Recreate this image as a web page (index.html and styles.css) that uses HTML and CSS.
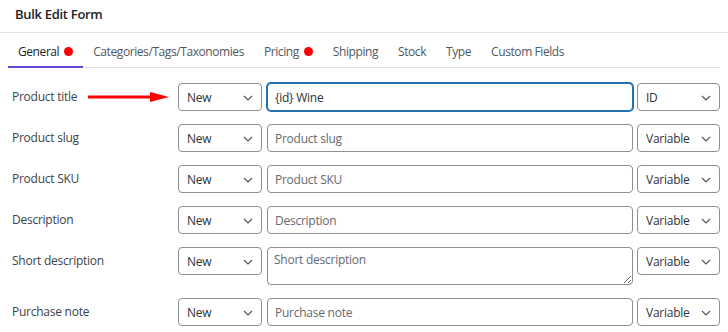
FILE: index.html
```html
<!DOCTYPE html>
<html>
<head>
	<meta charset="utf-8">
	<title>Bulk Edit Form</title>
	<link rel="stylesheet" href="styles.css">
</head>
<body>

<div class="panel-head">
	<span class="panel-title">Bulk Edit Form</span>
</div>

<div class="tabs">
	<div class="tab active">General <span class="dot"></span></div>
	<div class="tab">Categories/Tags/Taxonomies</div>
	<div class="tab">Pricing <span class="dot"></span></div>
	<div class="tab">Shipping</div>
	<div class="tab">Stock</div>
	<div class="tab">Type</div>
	<div class="tab">Custom Fields</div>
</div>

<div class="form">

	<div class="row">
		<label class="row-label">Product title</label>
		<svg class="pointer" width="82" height="12" viewBox="0 0 82 12">
			<line x1="0" y1="6" x2="64" y2="6" stroke="#f00" stroke-width="3" stroke-linecap="round"/>
			<polygon points="62,1 81,6 62,11" fill="#f00"/>
		</svg>
		<div class="select mode"><select><option>New</option></select><svg class="chev" width="10" height="6" viewBox="0 0 10 6"><path d="M1 1l4 4 4-4" fill="none" stroke="#50575e" stroke-width="1.2"/></svg></div>
		<input class="field focused" type="text" value="{id} Wine">
		<div class="select kind"><select><option>ID</option></select><svg class="chev" width="10" height="6" viewBox="0 0 10 6"><path d="M1 1l4 4 4-4" fill="none" stroke="#50575e" stroke-width="1.2"/></svg></div>
	</div>

	<div class="row">
		<label class="row-label">Product slug</label>
		<div class="select mode"><select><option>New</option></select><svg class="chev" width="10" height="6" viewBox="0 0 10 6"><path d="M1 1l4 4 4-4" fill="none" stroke="#50575e" stroke-width="1.2"/></svg></div>
		<input class="field" type="text" placeholder="Product slug">
		<div class="select kind"><select><option>Variable</option></select><svg class="chev" width="10" height="6" viewBox="0 0 10 6"><path d="M1 1l4 4 4-4" fill="none" stroke="#50575e" stroke-width="1.2"/></svg></div>
	</div>

	<div class="row">
		<label class="row-label">Product SKU</label>
		<div class="select mode"><select><option>New</option></select><svg class="chev" width="10" height="6" viewBox="0 0 10 6"><path d="M1 1l4 4 4-4" fill="none" stroke="#50575e" stroke-width="1.2"/></svg></div>
		<input class="field" type="text" placeholder="Product SKU">
		<div class="select kind"><select><option>Variable</option></select><svg class="chev" width="10" height="6" viewBox="0 0 10 6"><path d="M1 1l4 4 4-4" fill="none" stroke="#50575e" stroke-width="1.2"/></svg></div>
	</div>

	<div class="row">
		<label class="row-label">Description</label>
		<div class="select mode"><select><option>New</option></select><svg class="chev" width="10" height="6" viewBox="0 0 10 6"><path d="M1 1l4 4 4-4" fill="none" stroke="#50575e" stroke-width="1.2"/></svg></div>
		<input class="field" type="text" placeholder="Description">
		<div class="select kind"><select><option>Variable</option></select><svg class="chev" width="10" height="6" viewBox="0 0 10 6"><path d="M1 1l4 4 4-4" fill="none" stroke="#50575e" stroke-width="1.2"/></svg></div>
	</div>

	<div class="row">
		<label class="row-label">Short description</label>
		<div class="select mode"><select><option>New</option></select><svg class="chev" width="10" height="6" viewBox="0 0 10 6"><path d="M1 1l4 4 4-4" fill="none" stroke="#50575e" stroke-width="1.2"/></svg></div>
		<textarea class="field area" placeholder="Short description"></textarea>
		<div class="select kind"><select><option>Variable</option></select><svg class="chev" width="10" height="6" viewBox="0 0 10 6"><path d="M1 1l4 4 4-4" fill="none" stroke="#50575e" stroke-width="1.2"/></svg></div>
	</div>

	<div class="row">
		<label class="row-label">Purchase note</label>
		<div class="select mode"><select><option>New</option></select><svg class="chev" width="10" height="6" viewBox="0 0 10 6"><path d="M1 1l4 4 4-4" fill="none" stroke="#50575e" stroke-width="1.2"/></svg></div>
		<input class="field" type="text" placeholder="Purchase note">
		<div class="select kind"><select><option>Variable</option></select><svg class="chev" width="10" height="6" viewBox="0 0 10 6"><path d="M1 1l4 4 4-4" fill="none" stroke="#50575e" stroke-width="1.2"/></svg></div>
	</div>

</div>

</body>
</html>
```

FILE: styles.css
```css
* {
	box-sizing: border-box;
}

body {
	margin: 0;
	background: #fff;
	color: #3c434a;
	font-family: "Open Sans", sans-serif;
	font-size: 12px;
	letter-spacing: -0.25px;
}

/* Header */
.panel-head {
	height: 33px;
	padding: 5px 15px 0;
	border-bottom: 1px solid #e2e4e7;
}

.panel-title {
	font-size: 13px;
	font-weight: 600;
	letter-spacing: -0.3px;
	color: #1d2327;
}

/* Tabs */
.tabs {
	display: flex;
	margin: 0 8px;
	padding-top: 7px;
	border-bottom: 1px solid #e2e4e7;
}

.tab {
	display: flex;
	align-items: center;
	gap: 5px;
	height: 28px;
	padding: 0 10px 4px;
	color: #50575e;
	font-weight: 500;
	letter-spacing: -0.42px;
	border-bottom: 2px solid transparent;
	margin-bottom: -1px;
}

.tab.active {
	color: #1d2327;
	border-bottom-color: #6645d6;
}

.dot {
	width: 9px;
	height: 9px;
	border-radius: 50%;
	background: #f00;
}

/* Form rows */
.form {
	padding: 15px 8px 0 12px;
}

.row {
	position: relative;
	display: flex;
	align-items: flex-start;
	margin-bottom: 13px;
}

.row-label {
	width: 166px;
	line-height: 28px;
	flex: none;
}

.pointer {
	position: absolute;
	left: 76px;
	top: 8px;
}

.select {
	position: relative;
	flex: none;
	height: 28px;
}

.select.mode {
	width: 84px;
	margin-right: 4px;
}

.select.kind {
	width: 83px;
	margin-left: 4px;
}

.select select {
	appearance: none;
	width: 100%;
	height: 100%;
	padding: 0 24px 0 8px;
	border: 1px solid #8c8f94;
	border-radius: 4px;
	background: #fff;
	color: #2c3338;
	font: inherit;
	letter-spacing: inherit;
}

.chev {
	position: absolute;
	right: 9px;
	top: 12px;
	pointer-events: none;
}

.field {
	flex: 1;
	height: 28px;
	margin-left: 1px;
	padding: 0 7px;
	border: 1px solid #8c8f94;
	border-radius: 4px;
	color: #2c3338;
	font: inherit;
	letter-spacing: inherit;
	background: #fff;
}

.field::placeholder {
	color: #646970;
}

.field.focused {
	border-color: #2271b1;
	box-shadow: 0 0 0 1px #2271b1;
}

.area {
	height: 38px;
	padding: 3px 6px;
	resize: vertical;
}
```
